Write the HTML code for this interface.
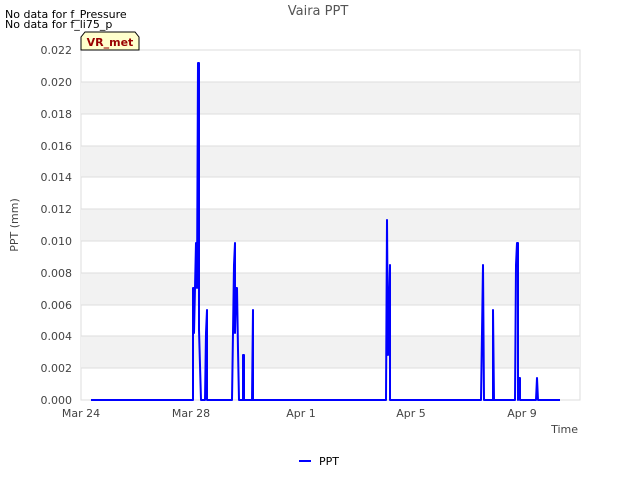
<!DOCTYPE html>
<html><head><style>
body{margin:0;width:640px;height:480px;background:#fff;font-family:"DejaVu Sans","Liberation Sans",sans-serif;overflow:hidden}
svg text{font-family:"DejaVu Sans","Liberation Sans",sans-serif}
</style></head><body>
<svg width="640" height="480" xmlns="http://www.w3.org/2000/svg">
<rect x="81" y="50" width="499" height="350" fill="#fff" stroke="#ddd"/>
<g fill="#f2f2f2">
<rect x="81" y="82" width="499" height="32"/><rect x="81" y="146" width="499" height="31"/>
<rect x="81" y="209" width="499" height="32"/><rect x="81" y="273" width="499" height="32"/>
<rect x="81" y="336" width="499" height="32"/></g>
<g stroke="#ddd" stroke-width="1">
<line x1="81" x2="580" y1="82" y2="82"/><line x1="81" x2="580" y1="114" y2="114"/>
<line x1="81" x2="580" y1="146" y2="146"/><line x1="81" x2="580" y1="177" y2="177"/>
<line x1="81" x2="580" y1="209" y2="209"/><line x1="81" x2="580" y1="241" y2="241"/>
<line x1="81" x2="580" y1="273" y2="273"/><line x1="81" x2="580" y1="305" y2="305"/>
<line x1="81" x2="580" y1="336" y2="336"/><line x1="81" x2="580" y1="368" y2="368"/>
</g>
<g font-size="11" fill="#444" text-anchor="end">
<text x="72" y="54">0.022</text><text x="72" y="86">0.020</text><text x="72" y="118">0.018</text>
<text x="72" y="150">0.016</text><text x="72" y="181">0.014</text><text x="72" y="213">0.012</text>
<text x="72" y="245">0.010</text><text x="72" y="277">0.008</text><text x="72" y="309">0.006</text>
<text x="72" y="340">0.004</text><text x="72" y="372">0.002</text><text x="72" y="404">0.000</text>
</g>
<g font-size="11" fill="#444" text-anchor="middle">
<text x="81" y="417">Mar 24</text><text x="191" y="417">Mar 28</text><text x="301" y="417">Apr 1</text>
<text x="411" y="417">Apr 5</text><text x="522" y="417">Apr 9</text></g>
<text x="578" y="433" font-size="11" fill="#444" text-anchor="end">Time</text>
<text x="18" y="225" font-size="11" fill="#444" text-anchor="middle" transform="rotate(-90 18 225)">PPT (mm)</text>
<text x="318" y="15" font-size="13" fill="#555" text-anchor="middle">Vaira PPT</text>
<text x="5" y="18" font-size="11" fill="#000">No data for f_Pressure</text>
<text x="5" y="28" font-size="11" fill="#000">No data for f_li75_p</text>
<path d="M81,50 L81,37 L85,32 L135,32 L139,37 L139,50 Z" fill="#ffffcc" stroke="#000" stroke-width="1"/>
<text x="110" y="46" font-size="11" font-weight="bold" fill="#990000" text-anchor="middle">VR_met</text>
<polyline fill="none" stroke="#0000ff" stroke-width="2" stroke-linejoin="round" points="
91,400 193,400 193,288 194,288 194,333 195,288 196,243 197,288 198,63 199,63 199,330 201,400 205,400 206,333 207,310 207,400 232,400 234,265 235,243 235,333 236,288 237,288 238,350 239,400 243,400 243,355 244,355 244,400 252,400 253,310 253,400 386,400 387,220 388,355 389,310 390,265 390,400 481,400 483,265 484,400 493,400 493,310 494,400 515,400 516,265 517,243 518,243 518,400 519,378 520,378 520,400 536,400 537,378 538,400 560,400"/>
<line x1="299" x2="311" y1="461" y2="461" stroke="#0000ff" stroke-width="2"/>
<text x="319" y="465" font-size="11" fill="#000">PPT</text>
</svg>
</body></html>
